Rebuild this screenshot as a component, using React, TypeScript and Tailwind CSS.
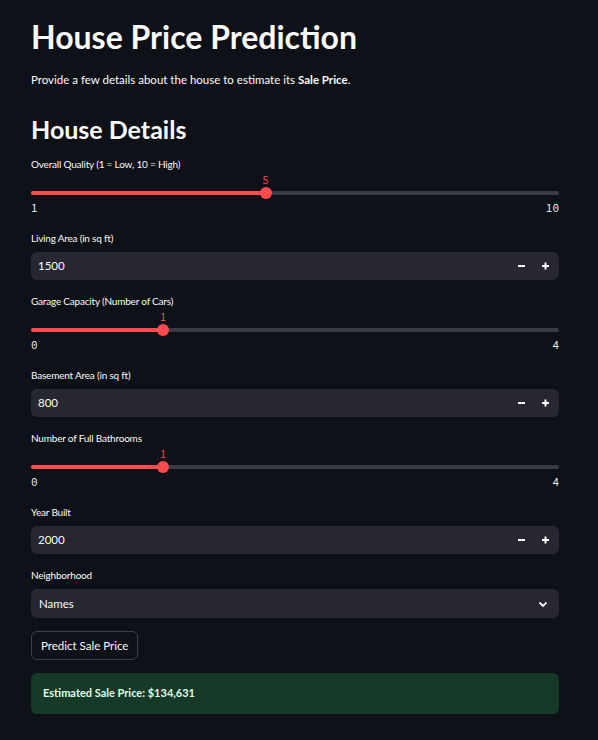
const font = { fontFamily: '"Source Sans Pro", Lato, "Noto Sans", sans-serif' };
const mono = { fontFamily: '"Source Code Pro", "DejaVu Sans Mono", monospace' };

function Label({ children }: { children: React.ReactNode }) {
  return <div className="h-[14px] text-[10px] leading-[14px] tracking-[-0.2px] text-[#fafafa]">{children}</div>;
}

function Slider({ label, value, min, max }: { label: string; value: number; min: number; max: number }) {
  const pct = ((value - min) / (max - min)) * 100;
  return (
    <div className="mb-[16px]">
      <Label>{label}</Label>
      <div className="relative h-[30px]">
        <div className="absolute left-0 right-0 top-[20px] h-[4px] rounded-full bg-[#3a3b44]" />
        <div className="absolute left-0 top-[20px] h-[4px] rounded-l-full bg-[#ff4b4b]" style={{ width: `${pct}%` }} />
        <div
          className="absolute top-[16px] w-[12px] h-[12px] -ml-[6px] rounded-full bg-[#ff4b4b]"
          style={{ left: `${pct}%` }}
        />
        <div
          className="absolute top-[2px] -translate-x-1/2 text-[11px] leading-[14px] text-[#ff4b4b]"
          style={{ left: `${pct}%`, ...mono }}
        >
          {value}
        </div>
      </div>
      <div className="flex justify-between text-[11px] leading-[14px] text-[#fafafa]" style={mono}>
        <span>{min}</span>
        <span>{max}</span>
      </div>
    </div>
  );
}

function NumberInput({ label, value }: { label: string; value: string }) {
  return (
    <div className="mb-[14px]">
      <Label>{label}</Label>
      <div className="mt-[7px] flex items-center h-[28px] rounded-[6px] bg-[#262730] pl-[7px] pr-[6px]">
        <span className="flex-1 text-[11.5px] text-[#fafafa]">{value}</span>
        <div className="flex items-center gap-[10px]">
          <svg width="14" height="14" viewBox="0 0 14 14"><rect x="3" y="6" width="7" height="2" fill="#fafafa" /></svg>
          <svg width="14" height="14" viewBox="0 0 14 14"><rect x="3" y="6" width="7" height="2" fill="#fafafa" /><rect x="5.5" y="3.5" width="2" height="7" fill="#fafafa" /></svg>
        </div>
      </div>
    </div>
  );
}

export default function App() {
  return (
    <div className="min-h-[740px] bg-[#0e1117] text-[#fafafa]" style={font}>
      <div className="pl-[31px] pr-[39px] pt-[17px]">
        <h1 className="text-[32px] leading-[40px] font-bold">House Price Prediction</h1>
        <p className="text-[11.5px] leading-[16px] mt-[15px]">
          Provide a few details about the house to estimate its <strong className="font-bold">Sale Price</strong>.
        </p>
        <h2 className="text-[25px] leading-[30px] font-bold mt-[26px] mb-[13px]">House Details</h2>

        <Slider label="Overall Quality (1 = Low, 10 = High)" value={5} min={1} max={10} />
        <NumberInput label="Living Area (in sq ft)" value="1500" />
        <Slider label="Garage Capacity (Number of Cars)" value={1} min={0} max={4} />
        <NumberInput label="Basement Area (in sq ft)" value="800" />
        <Slider label="Number of Full Bathrooms" value={1} min={0} max={4} />
        <NumberInput label="Year Built" value="2000" />

        <div>
          <Label>Neighborhood</Label>
          <div className="mt-[7px] flex items-center h-[29px] rounded-[6px] bg-[#262730] pl-[8px] pr-[10px]">
            <span className="flex-1 text-[11.5px] text-[#fafafa]">Names</span>
            <svg width="12" height="12" viewBox="0 0 12 12" fill="none" stroke="#fafafa" strokeWidth="1.8">
              <path d="M2.5 4.5 L6 8 L9.5 4.5" />
            </svg>
          </div>
        </div>

        <button className="mt-[13px] h-[29px] px-[9px] rounded-[6px] border border-[#3d3f49] text-[11.5px] text-[#fafafa]">
          Predict Sale Price
        </button>

        <div className="mt-[13px] h-[41px] flex items-center px-[12px] rounded-[6px] bg-[#173928] text-[11px] font-bold text-[#dffde9]">
          Estimated Sale Price: $134,631
        </div>
      </div>
    </div>
  );
}
